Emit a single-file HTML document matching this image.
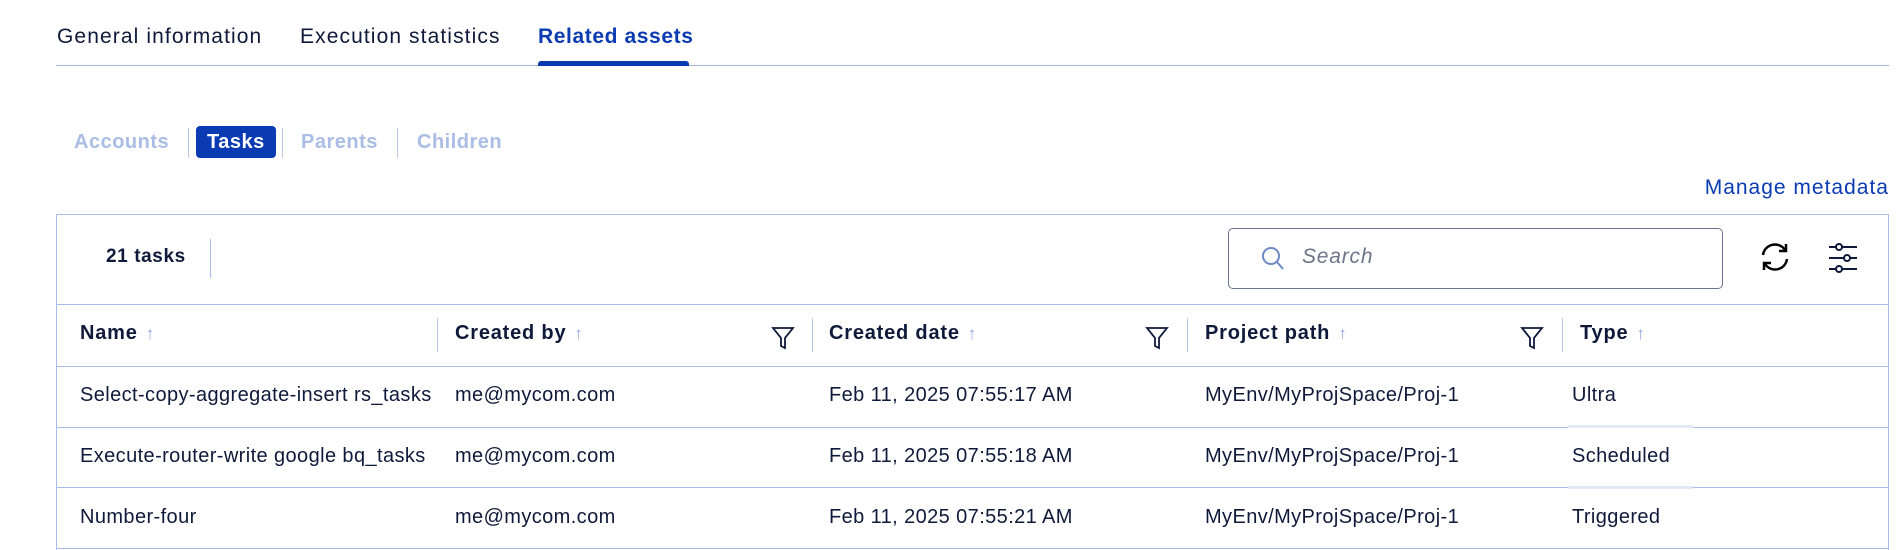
<!DOCTYPE html>
<html><head><style>
*{margin:0;padding:0;box-sizing:border-box}
body{width:1904px;height:550px;background:#fff;font-family:"Liberation Sans",sans-serif;color:#0f1a3a;position:relative;overflow:hidden}
.a{position:absolute;white-space:nowrap}
.tab{font-size:21px;top:25px;letter-spacing:1.1px}
.sub{font-size:20px;top:131px;color:#aabde6;font-weight:bold;letter-spacing:0.5px}
.vs{position:absolute;width:1px;background:#b8c6e6}
.h{font-size:20px;font-weight:bold;top:322px;letter-spacing:0.8px}
.h span{color:#8ea6dd;font-weight:normal;font-size:17px;margin-left:8px}
.c{font-size:20px;overflow:hidden;letter-spacing:0.4px}
.hl{position:absolute;left:56px;width:1833px;height:1px;background:#a8bde8}
</style></head><body>
<div class="a tab" style="left:57px">General information</div>
<div class="a tab" style="left:300px">Execution statistics</div>
<div class="a tab" style="left:538px;color:#0b3bb3;font-weight:bold;letter-spacing:0.6px">Related assets</div>
<div class="a" style="left:56px;top:65px;width:1833px;height:1px;background:#a8bad8"></div>
<div class="a" style="left:538px;top:61px;width:151px;height:5px;background:#0b3bb3;border-radius:3px 3px 0 0"></div>

<div class="a sub" style="left:74px">Accounts</div>
<div class="vs" style="left:188px;top:128px;height:30px"></div>
<div class="a" style="left:196px;top:126px;width:80px;height:32px;background:#0b3bb3;border-radius:4px"></div>
<div class="a sub" style="left:207px;color:#fff">Tasks</div>
<div class="vs" style="left:282px;top:128px;height:30px"></div>
<div class="a sub" style="left:301px">Parents</div>
<div class="vs" style="left:397px;top:128px;height:30px"></div>
<div class="a sub" style="left:417px">Children</div>

<div class="a" style="right:15px;top:176px;font-size:21px;letter-spacing:1px;color:#0b3bb3">Manage metadata</div>

<div class="a" style="left:56px;top:214px;width:1833px;height:336px;border:1px solid #a8bde8;border-bottom:none"></div>
<div class="a" style="left:106px;top:246px;font-size:19px;font-weight:bold;letter-spacing:0.6px">21 tasks</div>
<div class="vs" style="left:210px;top:239px;height:39px;background:#a8bde8"></div>
<div class="a" style="left:1228px;top:228px;width:495px;height:61px;border:1px solid #6a7690;border-radius:5px"></div>
<svg class="a" style="left:1260px;top:245px" width="26" height="28" viewBox="0 0 26 28"><circle cx="11" cy="11" r="8" fill="none" stroke="#6e8ac6" stroke-width="2"/><line x1="17" y1="17" x2="23" y2="24" stroke="#6e8ac6" stroke-width="2"/></svg>
<div class="a" style="left:1302px;top:245px;font-size:21px;letter-spacing:0.8px;font-style:italic;color:#6b7489">Search</div>
<svg class="a" style="left:1758px;top:240px" width="34" height="34" viewBox="0 0 34 34" fill="none" stroke="#000" stroke-width="2.5"><path d="M5 15 A12 12 0 0 1 27 10"/><path d="M28 4 L28 11 L21 11"/><path d="M29 19 A12 12 0 0 1 7 24"/><path d="M6 30 L6 23 L13 23"/></svg>
<svg class="a" style="left:1827px;top:241px" width="32" height="34" viewBox="0 0 32 34" stroke="#0f1a3a" stroke-width="2" fill="#fff"><line x1="2" y1="6" x2="30" y2="6"/><line x1="2" y1="17" x2="30" y2="17"/><line x1="2" y1="28" x2="30" y2="28"/><circle cx="12" cy="6" r="3"/><circle cx="20" cy="17" r="3"/><circle cx="12" cy="28" r="3"/></svg>

<div class="hl" style="top:304px"></div>
<div class="a h" style="left:80px">Name<span>↑</span></div>
<div class="vs" style="left:437px;top:318px;height:34px"></div>
<div class="a h" style="left:455px">Created by<span>↑</span></div>
<div class="vs" style="left:812px;top:318px;height:34px"></div>
<div class="a h" style="left:829px">Created date<span>↑</span></div>
<div class="vs" style="left:1187px;top:318px;height:34px"></div>
<div class="a h" style="left:1205px">Project path<span>↑</span></div>
<div class="vs" style="left:1562px;top:318px;height:34px"></div>
<div class="a h" style="left:1580px">Type<span>↑</span></div>
<svg class="a" style="left:771px;top:325px" width="24" height="26" viewBox="0 0 24 26" fill="none" stroke="#0f1a3a" stroke-width="1.8"><path d="M2 3 H22 L14 13 V23 L10 21 V13 Z"/></svg>
<svg class="a" style="left:1145px;top:325px" width="24" height="26" viewBox="0 0 24 26" fill="none" stroke="#0f1a3a" stroke-width="1.8"><path d="M2 3 H22 L14 13 V23 L10 21 V13 Z"/></svg>
<svg class="a" style="left:1520px;top:325px" width="24" height="26" viewBox="0 0 24 26" fill="none" stroke="#0f1a3a" stroke-width="1.8"><path d="M2 3 H22 L14 13 V23 L10 21 V13 Z"/></svg>
<div class="hl" style="top:366px"></div>
<div class="hl" style="top:427px"></div>
<div class="hl" style="top:487px"></div>
<div class="hl" style="top:548px"></div>
<div class="a" style="left:1568px;top:425px;width:125px;height:3px;background:#e2e8f4"></div>
<div class="a" style="left:1568px;top:486px;width:125px;height:3px;background:#e2e8f4"></div>

<div class="a c" style="left:80px;top:384px;width:374px">Select-copy-aggregate-insert rs_tasks</div>
<div class="a c" style="left:455px;top:384px">me@mycom.com</div>
<div class="a c" style="left:829px;top:384px">Feb 11, 2025 07:55:17 AM</div>
<div class="a c" style="left:1205px;top:384px">MyEnv/MyProjSpace/Proj-1</div>
<div class="a c" style="left:1572px;top:384px">Ultra</div>

<div class="a c" style="left:80px;top:445px;width:374px">Execute-router-write google bq_tasks</div>
<div class="a c" style="left:455px;top:445px">me@mycom.com</div>
<div class="a c" style="left:829px;top:445px">Feb 11, 2025 07:55:18 AM</div>
<div class="a c" style="left:1205px;top:445px">MyEnv/MyProjSpace/Proj-1</div>
<div class="a c" style="left:1572px;top:445px">Scheduled</div>

<div class="a c" style="left:80px;top:506px">Number-four</div>
<div class="a c" style="left:455px;top:506px">me@mycom.com</div>
<div class="a c" style="left:829px;top:506px">Feb 11, 2025 07:55:21 AM</div>
<div class="a c" style="left:1205px;top:506px">MyEnv/MyProjSpace/Proj-1</div>
<div class="a c" style="left:1572px;top:506px">Triggered</div>
</body></html>
